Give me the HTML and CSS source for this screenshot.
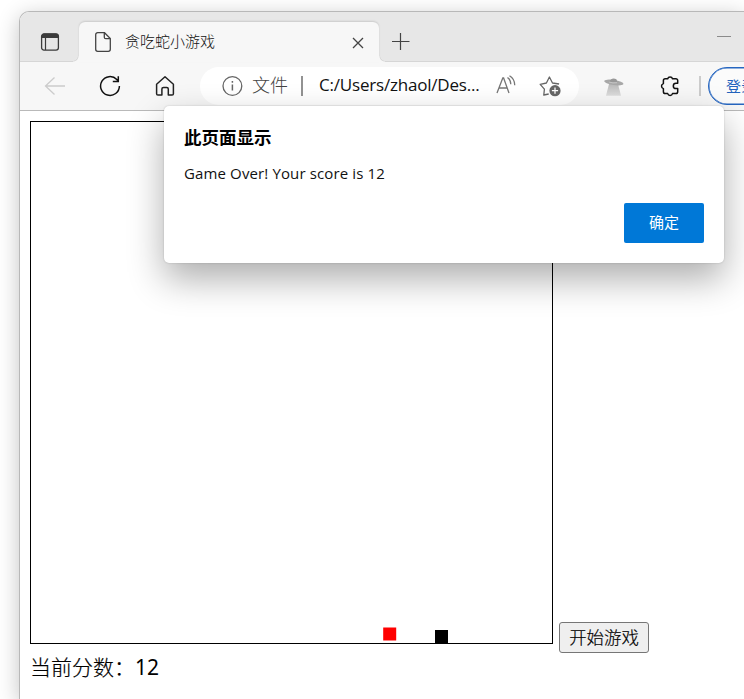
FILE: index.html
```html
<!DOCTYPE html>
<html lang="zh-CN">
<head>
<meta charset="utf-8">
<title>贪吃蛇小游戏</title>
<link rel="stylesheet" href="styles.css">
</head>
<body>
<div class="window">
  <header class="tabstrip">
    <svg class="tab-actions" width="20" height="20" viewBox="0 0 20 20"><rect x="1.6" y="1.9" width="16.8" height="16.2" rx="2.4" fill="none" stroke="#3b3b3b" stroke-width="1.3"/><path d="M1.5 6V4.5a3 3 0 0 1 3-3h11a3 3 0 0 1 3 3V6z" fill="#3b3b3b"/><path d="M5.5 6v12" stroke="#3b3b3b" stroke-width="1.2"/></svg>
    <div class="tab">
      <svg class="page-icon" width="18" height="22" viewBox="0 0 18 22" fill="none" stroke="#444" stroke-width="1.3"><path d="M3.7 1.7H10.5L16.3 7.5V18.3a2 2 0 0 1-2 2H3.7a2 2 0 0 1-2-2V3.7a2 2 0 0 1 2-2zM10.3 1.9V6.2a1.5 1.5 0 0 0 1.5 1.5h4.4"/></svg>
      <span class="tab-title">贪吃蛇小游戏</span>
      <svg class="tab-close" width="12" height="12" viewBox="0 0 12 12"><path d="M1 1L11 11M11 1L1 11" stroke="#444" stroke-width="1.3"/></svg>
    </div>
    <svg class="new-tab" width="18" height="18" viewBox="0 0 18 18"><path d="M0 9.5H17.5M8.5 1V18" stroke="#444" stroke-width="1.2"/></svg>
    <span class="minimize"></span>
  </header>
  <nav class="toolbar">
    <svg class="back" width="22" height="20" viewBox="0 0 22 20" fill="none" stroke="#ccc" stroke-width="1.3"><path d="M21 10H1.5M10.5 1.5L1.5 10l9 8.5"/></svg>
    <svg class="reload" width="22" height="22" viewBox="0 0 22 22" fill="none" stroke="#111" stroke-width="1.5"><path d="M20.4 11a9.4 9.4 0 1 1-2.6-6.5L19.2 6M19.3 1.2V6.5H13.8"/></svg>
    <svg class="home" width="20" height="22" viewBox="0 0 20 22" fill="none" stroke="#222" stroke-width="1.5" stroke-linejoin="round"><path d="M1.6 9.2L10 1.8l8.4 7.4v9.6a1.3 1.3 0 0 1-1.3 1.3h-3.8v-6a1.6 1.6 0 0 0-1.6-1.6H8.5a1.6 1.6 0 0 0-1.6 1.6v6H2.9a1.3 1.3 0 0 1-1.3-1.3z"/></svg>
    <div class="address">
      <svg class="info" width="22" height="22" viewBox="0 0 22 22" fill="none" stroke="#666" stroke-width="1.3"><circle cx="11.4" cy="11" r="9.4"/><path d="M11.4 9.5v6M11.4 6v1.8" stroke-width="1.5"/></svg>
      <span class="scheme">文件</span>
      <span class="divider"></span>
      <span class="url">C:/Users/zhaol/Des...</span>
      <svg class="read-aloud" width="20" height="20" viewBox="0 0 20 20" fill="none" stroke="#777" stroke-width="1.3"><path d="M1 18L6.8 3h.8L13 18M3 13h8M11.5 2.5q3.2 2.2 3.3 6.8M13.5.8Q18.8 4 18.7 10.3"/></svg>
      <svg class="favorite" width="22" height="22" viewBox="0 0 22 22"><path d="M9.7 19L4.8 20 5.4 14.2 1.2 9.3 7.4 8 10.4 2l3.1 6 6.6 1" fill="none" stroke="#666" stroke-width="1.3" stroke-linejoin="round"/><circle cx="16" cy="15.7" r="5.6" fill="#666"/><path d="M12.9 15.7h6.2M16 12.6v6.2" stroke="#fff" stroke-width="1.3"/></svg>
    </div>
    <svg class="ufo" width="20" height="18" viewBox="0 0 20 18"><defs><linearGradient id="beam" x2="0" y2="1"><stop stop-color="#b8b8b8"/><stop offset="1" stop-color="#dedede"/></linearGradient></defs><path d="M5 6h9l3 11.8H2z" fill="url(#beam)"/><ellipse cx="9.8" cy="4.5" rx="9.8" ry="2.5" transform="rotate(9 9.8 4.5)" fill="#a8a8a8"/><path d="M5 4Q7.5-1 12.4 1.2L13.4 4z" fill="#989898"/><path d="M5 4q4 1.5 8 .7" fill="none" stroke="#c6c6c6"/></svg>
    <svg class="extensions" width="20" height="22" viewBox="0 0 20 22"><path d="M5.2 3.7H7.7A2.5 2.5 0 0 1 12.5 3.7H15.9a1.8 1.8 0 0 1 1.8 1.8V8.2H16a2.6 2.6 0 0 0 0 5.4H17.7v3.2a1.8 1.8 0 0 1-1.8 1.8H12.5a2.5 2.5 0 0 1-4.8 0H5.2a1.8 1.8 0 0 1-1.8-1.8V13.6a2.6 2.6 0 0 1 0-5V5.5a1.8 1.8 0 0 1 1.8-1.8z" fill="none" stroke="#111" stroke-width="1.5" stroke-linejoin="round"/></svg>
    <span class="separator"></span>
    <button class="sign-in">登录</button>
  </nav>
  <main class="page">
    <div class="game">
      <svg class="board" width="521" height="521" viewBox="0 0 521 521"><rect x="352.2" y="505.5" width="13" height="13" fill="red"/><rect x="404" y="508" width="13" height="13" fill="#000"/></svg>
      <button class="start">开始游戏</button>
    </div>
    <p class="score">当前分数：<span>12</span></p>
  </main>
</div>
<section class="dialog" role="alertdialog">
  <h1>此页面显示</h1>
  <p>Game Over! Your score is 12</p>
  <button class="confirm">确定</button>
</section>
</body>
</html>
```
FILE: styles.css
```css
* { box-sizing: border-box; }

body {
  margin: 0;
  width: 744px;
  height: 699px;
  padding: 11px 0 0 19px;
  overflow: hidden;
  background: #fff;
  font-family: "Open Sans", "Noto Sans CJK SC", sans-serif;
}

svg, span { flex: none; }
svg { display: block; }

button {
  margin: 0;
  padding: 0;
  font-family: inherit;
  white-space: nowrap;
}

.window {
  width: 725px;
  height: 688px;
  overflow: hidden;
  border: 1px solid #b8b8b8;
  border-width: 1px 0 0 1px;
  border-radius: 10px 0 0 0;
  background: #fff;
  box-shadow: 0 5px 22px rgba(0, 0, 0, .24);
}

.tabstrip {
  display: flex;
  height: 50px;
  background: #e7e7e7;
  border-bottom: 1px solid #d6d6d6;
}

.tab-actions { margin: 20px 0 0 20px; }

.tab {
  position: relative;
  display: flex;
  width: 300px;
  height: 40px;
  margin: 10px 0 0 19px;
  background: #f7f7f7;
  border-radius: 6px 6px 0 0;
  box-shadow: 0 -1px 2px rgba(0, 0, 0, .13);
}

.tab::before,
.tab::after {
  content: "";
  position: absolute;
  bottom: 0;
  width: 6px;
  height: 6px;
}

.tab::before {
  left: -6px;
  background: radial-gradient(circle at 0 0, transparent 4.5px, #d6d6d6 5px, #f7f7f7 6px);
}

.tab::after {
  right: -6px;
  background: radial-gradient(circle at 100% 0, transparent 4.5px, #d6d6d6 5px, #f7f7f7 6px);
}

.page-icon { margin: 9px 0 0 15px; }

.tab-title {
  width: 100px;
  margin: 9px 0 0 13px;
  font-size: 15px;
  line-height: 21px;
  color: #111;
  font-weight: 300;
}

.tab-close { margin: 15px 0 0 127px; }
.new-tab { margin: 20px 0 0 13px; }

.minimize {
  width: 14px;
  height: 1px;
  margin: 24px 0 0 307px;
  background: #8b8b8b;
}

.toolbar {
  display: flex;
  height: 49px;
  background: #f7f7f7;
  border-bottom: 1px solid #b9b9b9;
}

.back { margin: 14px 0 0 24px; }
.reload { margin: 13px 0 0 33px; }
.home { margin: 13px 0 0 34px; }

.address {
  display: flex;
  flex: none;
  width: 379px;
  height: 38px;
  margin: 5px 0 0 25px;
  background: #fff;
  border-radius: 19px;
}

.info { margin: 8px 0 0 21px; }

.scheme {
  width: 36px;
  margin: 5px 0 0 9px;
  font-size: 18px;
  line-height: 26px;
  color: #444;
  font-weight: 300;
}

.divider {
  width: 2px;
  height: 20px;
  margin: 9px 0 0 13px;
  background: #929292;
}

.url {
  width: 162px;
  margin: 5px 0 0 16px;
  font-size: 17px;
  line-height: 26px;
  letter-spacing: -.2px;
  color: #111;
  white-space: nowrap;
}

.read-aloud { margin: 8px 0 0 15px; }
.favorite { margin: 8px 0 0 23px; }
.ufo { margin: 16px 0 0 25px; }
.extensions { margin: 13px 0 0 36px; }

.separator {
  width: 2px;
  height: 20px;
  margin: 14px 0 0 19px;
  background: #ccc;
}

.sign-in {
  flex: none;
  width: 80px;
  height: 38px;
  margin: 5px 0 0 7px;
  padding: 0 0 2px 17px;
  border: 1.5px solid #2666c0;
  border-radius: 19px;
  background: #fbfbfb;
  box-shadow: inset 0 0 0 .5px #2666c0;
  color: #2464bd;
  font-size: 15px;
  text-align: left;
}

.page { padding: 10px; }

.game {
  display: flex;
  align-items: flex-end;
}

.board {
  flex: none;
  box-sizing: content-box;
  border: 1px solid #000;
}

.start {
  flex: none;
  position: relative;
  top: 9px;
  width: 90px;
  height: 31px;
  margin-left: 6px;
  padding-bottom: 3px;
  border: 1px solid #767676;
  border-radius: 3px;
  background: #efefef;
  color: #000;
  font-size: 17.4px;
  font-weight: 300;
  -webkit-text-stroke: .2px #000;
}

.score {
  margin: 8px 0 0;
  font-size: 21px;
  line-height: 30px;
  font-weight: 300;
  white-space: nowrap;
  -webkit-text-stroke: .2px #000;
}

.score span {
  font-family: "Noto Sans", sans-serif;
  font-weight: 400;
  -webkit-text-stroke: 0;
}

.dialog {
  position: absolute;
  left: 164px;
  top: 106px;
  width: 560px;
  height: 157px;
  padding: 19px 20px 20px;
  display: flex;
  flex-direction: column;
  background: #fff;
  border-radius: 5px;
  box-shadow: 0 0 2px rgba(0, 0, 0, .2), 0 16px 36px rgba(0, 0, 0, .32);
}

.dialog h1 {
  margin: 0;
  font-size: 17.5px;
  line-height: 24px;
  font-weight: 700;
}

.dialog p {
  margin: 13px 0 0;
  font-size: 15px;
  line-height: 22px;
  color: #111;
  letter-spacing: .13px;
}

.confirm {
  align-self: flex-end;
  width: 80px;
  height: 40px;
  margin-top: 19px;
  padding-bottom: 3px;
  border: 0;
  border-radius: 2px;
  background: #0078d7;
  color: #fff;
  font-size: 15px;
}
```
